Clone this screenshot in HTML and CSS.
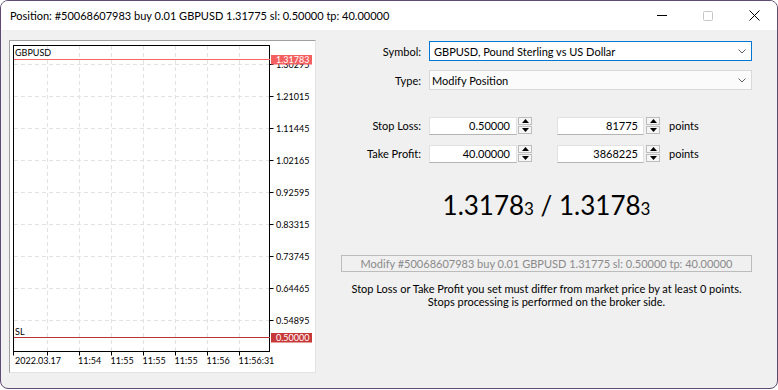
FILE: index.html
```html
<!DOCTYPE html>
<html>
<head>
<meta charset="utf-8">
<link rel="stylesheet" href="styles.css">
</head>
<body>
<div class="window">
  <div class="titlebar">
    <span class="title">Position: #50068607983 buy 0.01 GBPUSD 1.31775 sl: 0.50000 tp: 40.00000</span>
    <div class="controls">
      <span class="ctl"><svg width="10" height="10" viewBox="0 0 10 10"><line x1="0" y1="4.5" x2="10" y2="4.5" stroke="#000" stroke-width="1"/></svg></span>
      <span class="ctl"><svg width="10" height="10" viewBox="0 0 10 10"><rect x="0.5" y="0.5" width="9" height="9" rx="1" fill="none" stroke="#c8c8c8" stroke-width="1"/></svg></span>
      <span class="ctl"><svg width="11" height="11" viewBox="0 0 11 11"><path d="M0.5 0.5 L10.5 10.5 M10.5 0.5 L0.5 10.5" stroke="#000" stroke-width="1" fill="none"/></svg></span>
    </div>
  </div>
  <div class="content">
    <div class="chart-frame">
      <svg class="chart" width="305" height="331" viewBox="0 0 305 331">
        <g class="grid">
          <line x1="4" y1="23.5" x2="259" y2="23.5"/>
          <line x1="4" y1="55.5" x2="259" y2="55.5"/>
          <line x1="4" y1="87.5" x2="259" y2="87.5"/>
          <line x1="4" y1="119.5" x2="259" y2="119.5"/>
          <line x1="4" y1="151.5" x2="259" y2="151.5"/>
          <line x1="4" y1="183.5" x2="259" y2="183.5"/>
          <line x1="4" y1="215.5" x2="259" y2="215.5"/>
          <line x1="4" y1="247.5" x2="259" y2="247.5"/>
          <line x1="4" y1="279.5" x2="259" y2="279.5"/>
          <line x1="37.5" y1="5" x2="37.5" y2="310"/>
          <line x1="69.5" y1="5" x2="69.5" y2="310"/>
          <line x1="101.5" y1="5" x2="101.5" y2="310"/>
          <line x1="133.5" y1="5" x2="133.5" y2="310"/>
          <line x1="165.5" y1="5" x2="165.5" y2="310"/>
          <line x1="197.5" y1="5" x2="197.5" y2="310"/>
          <line x1="229.5" y1="5" x2="229.5" y2="310"/>
        </g>
        <g class="ticks">
          <path d="M259.5 23.5h4M259.5 55.5h4M259.5 87.5h4M259.5 119.5h4M259.5 151.5h4M259.5 183.5h4M259.5 215.5h4M259.5 247.5h4M259.5 279.5h4"/>
          <path d="M3.5 310.5v4M37.5 310.5v4M69.5 310.5v4M101.5 310.5v4M133.5 310.5v4M165.5 310.5v4M197.5 310.5v4M229.5 310.5v4"/>
        </g>
        <rect class="plot" x="3.5" y="4.5" width="256" height="306"/>
        <line class="cur-line" x1="4" y1="18.5" x2="260" y2="18.5"/>
        <line class="sl-line" x1="4" y1="296.5" x2="260" y2="296.5"/>
        <g class="axis-text">
          <text x="266" y="26.5">1.30295</text>
          <text x="266" y="58.5">1.21015</text>
          <text x="266" y="90.5">1.11445</text>
          <text x="266" y="122.5">1.02165</text>
          <text x="266" y="154.5">0.92595</text>
          <text x="266" y="186.5">0.83315</text>
          <text x="266" y="218.5">0.73745</text>
          <text x="266" y="250.5">0.64465</text>
          <text x="266" y="282.5">0.54895</text>
          <text x="5" y="15">GBPUSD</text>
          <text x="5" y="294">SL</text>
          <text x="5" y="323">2022.03.17</text>
          <text x="68" y="323">11:54</text>
          <text x="100.5" y="323">11:55</text>
          <text x="132.5" y="323">11:55</text>
          <text x="164.5" y="323">11:55</text>
          <text x="196.5" y="323">11:56</text>
          <text x="228.5" y="323">11:56:31</text>
        </g>
        <rect class="cur-tag" x="261" y="14" width="41" height="9.5"/>
        <text class="tag-text" x="266" y="22">1.31783</text>
        <rect class="sl-tag" x="261" y="292" width="41" height="9.5"/>
        <text class="tag-text" x="266" y="300">0.50000</text>
      </svg>
    </div>
    <div class="form">
      <div class="row">
        <span class="lbl">Symbol:</span>
        <div class="select focus"><span>GBPUSD, Pound Sterling vs US Dollar</span><svg width="8" height="5" viewBox="0 0 8 5"><path d="M0.5 0.5 L4 4 L7.5 0.5" fill="none" stroke="#5f5f5f" stroke-width="1"/></svg></div>
      </div>
      <div class="row r2">
        <span class="lbl">Type:</span>
        <div class="select plain"><span>Modify Position</span><svg width="8" height="5" viewBox="0 0 8 5"><path d="M0.5 0.5 L4 4 L7.5 0.5" fill="none" stroke="#5f5f5f" stroke-width="1"/></svg></div>
      </div>
      <div class="row spinrow r3">
        <span class="lbl">Stop Loss:</span>
        <div class="num">0.50000</div>
        <div class="spin"><span><svg width="7" height="4" viewBox="0 0 7 4"><path d="M3.5 0 L7 4 L0 4 Z" fill="#000"/></svg></span><span><svg width="7" height="4" viewBox="0 0 7 4"><path d="M0 0 L7 0 L3.5 4 Z" fill="#000"/></svg></span></div>
        <div class="num pts">81775</div>
        <div class="spin s2"><span><svg width="7" height="4" viewBox="0 0 7 4"><path d="M3.5 0 L7 4 L0 4 Z" fill="#000"/></svg></span><span><svg width="7" height="4" viewBox="0 0 7 4"><path d="M0 0 L7 0 L3.5 4 Z" fill="#000"/></svg></span></div>
        <span class="unit">points</span>
      </div>
      <div class="row spinrow r4">
        <span class="lbl">Take Profit:</span>
        <div class="num">40.00000</div>
        <div class="spin"><span><svg width="7" height="4" viewBox="0 0 7 4"><path d="M3.5 0 L7 4 L0 4 Z" fill="#000"/></svg></span><span><svg width="7" height="4" viewBox="0 0 7 4"><path d="M0 0 L7 0 L3.5 4 Z" fill="#000"/></svg></span></div>
        <div class="num pts">3868225</div>
        <div class="spin s2"><span><svg width="7" height="4" viewBox="0 0 7 4"><path d="M3.5 0 L7 4 L0 4 Z" fill="#000"/></svg></span><span><svg width="7" height="4" viewBox="0 0 7 4"><path d="M0 0 L7 0 L3.5 4 Z" fill="#000"/></svg></span></div>
        <span class="unit">points</span>
      </div>
      <div class="price">1.3178<span class="small">3</span> / 1.3178<span class="small">3</span></div>
      <button class="modify" disabled>Modify #50068607983 buy 0.01 GBPUSD 1.31775 sl: 0.50000 tp: 40.00000</button>
      <p class="note">Stop Loss or Take Profit you set must differ from market price by at least 0 points.<br>Stops processing is performed on the broker side.</p>
    </div>
  </div>
</div>
</body>
</html>
```

FILE: styles.css
```css
* { box-sizing: border-box; }
html, body { margin: 0; background: #fff; }
body {
  font-family: Lato, "Liberation Sans", sans-serif;
  font-size: 11px;
  color: #000;
}
.window {
  width: 778px;
  height: 389px;
  border: 1px solid #5e4a72;
  border-radius: 8px;
  background: #f0f0f0;
  overflow: hidden;
  display: flex;
  flex-direction: column;
}
.titlebar {
  height: 29px;
  flex: none;
  background: #fff;
  display: flex;
  align-items: center;
}
.title {
  flex: 1;
  padding-left: 9px;
  font-size: 11px;
}
.controls {
  display: flex;
  align-self: stretch;
}
.ctl {
  width: 46px;
  display: flex;
  align-items: center;
  justify-content: center;
}
.ctl svg { display: block; }
.content {
  flex: 1;
  display: flex;
  align-items: flex-start;
  padding: 10px 0 0 8px;
}
.chart-frame {
  flex: none;
  width: 307px;
  height: 333px;
  border: 1px solid;
  border-color: #a0a0a0 #e3e3e3 #e3e3e3 #a0a0a0;
  background: #fff;
}
.chart { display: block; }
.chart .grid line {
  stroke: #e2e2e2;
  stroke-width: 1;
  stroke-dasharray: 4 3;
}
.chart .ticks path { stroke: #000; stroke-width: 1; fill: none; }
.chart .plot { fill: none; stroke: #000; stroke-width: 1; }
.chart .cur-line { stroke: #ff6464; stroke-width: 1; }
.chart .sl-line { stroke: #b83434; stroke-width: 1; }
.chart text {
  font-family: Lato, "Liberation Sans", sans-serif;
  font-size: 9px;
  fill: #000;
}
.chart .cur-tag { fill: #f45f5f; }
.chart .sl-tag { fill: #c73838; }
.chart .tag-text { fill: #fff; }

.form {
  width: 411px;
  margin-left: 25px;
  margin-top: 1px;
  display: flex;
  flex-direction: column;
}
.row {
  display: flex;
  align-items: center;
}
.r2 { margin-top: 9px; }
.r3 { margin-top: 27px; }
.r4 { margin-top: 10px; }
.lbl {
  width: 80px;
  margin-right: 8px;
  text-align: right;
}
.select {
  width: 323px;
  height: 20px;
  display: flex;
  align-items: center;
  justify-content: space-between;
  padding: 0 5px 0 4px;
  border: 1px solid #d9d9d9;
  background: #fbfbfb;
}
.select svg { display: block; }
.select.focus {
  border-color: #0078d4;
  background: #fff;
}
.select.plain { padding-left: 2px; }
.spinrow { align-items: flex-start; }
.spinrow .lbl { line-height: 18px; }
.num {
  width: 88px;
  height: 18px;
  line-height: 16px;
  text-align: right;
  padding-right: 6px;
  background: #fff;
  border: 1px solid #e2e2e2;
  border-bottom-color: #b4b4b4;
}
.num.pts {
  width: 87px;
  margin-left: 25px;
  padding-right: 5px;
}
.spin {
  width: 14px;
  height: 17px;
  margin-left: 1px;
  display: flex;
  flex-direction: column;
  gap: 1px;
}
.spin.s2 { margin-left: 2px; }
.spin span {
  flex: 1;
  display: flex;
  align-items: center;
  justify-content: center;
  border: 1px solid #bdbdbd;
  background: #f6f6f6;
}
.spin svg { display: block; }
.unit {
  margin-left: 9px;
  line-height: 18px;
}
.price {
  margin-top: 27px;
  font-size: 26px;
  line-height: 30px;
  text-align: center;
}
.price .small { font-size: 17px; }
.modify {
  margin-top: 31px;
  height: 17px;
  padding: 0;
  border: 1px solid #bcbcbc;
  background: #f0f0f0;
  color: #8a8a8a;
  font-family: Lato, "Liberation Sans", sans-serif;
  font-size: 11px;
  line-height: 15px;
}
.note {
  margin: 10px 0 0;
  line-height: 13px;
  text-align: center;
}
```
